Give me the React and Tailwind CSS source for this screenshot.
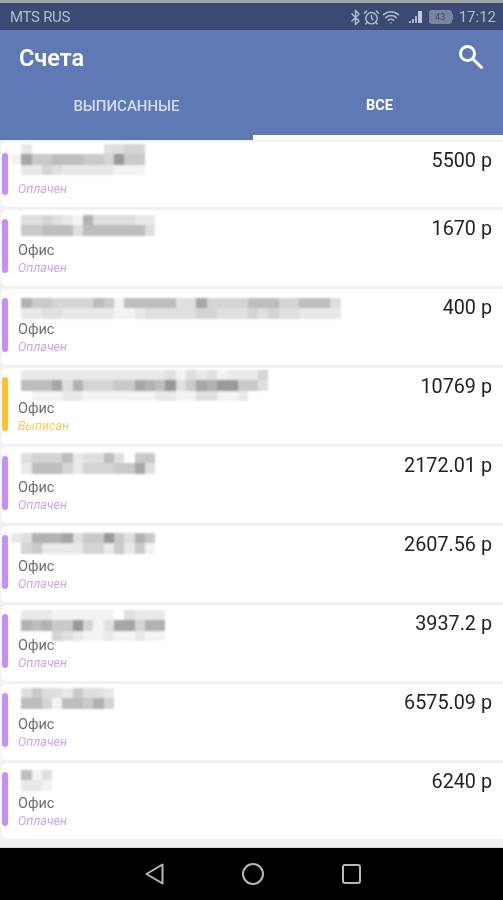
import { Bluetooth, AlarmClock, Wifi } from 'lucide-react'

const shade = {
  0: 'bg-transparent',
  1: 'bg-[#f3f3f3]',
  2: 'bg-[#e9e9e9]',
  3: 'bg-[#dfdfdf]',
  4: 'bg-[#d4d4d4]',
  5: 'bg-[#c9c9c9]',
  6: 'bg-[#bdbdbd]',
  7: 'bg-[#b2b2b2]',
  8: 'bg-[#a6a6a6]',
  9: 'bg-[#999999]',
}

const invoices = [
  { amount: '5500 р', top: 'mt-[2px]', name: ['0200000003344', '1855666554955', '0224322222111'], office: false },
  { amount: '1670 р', top: 'mt-[5px]', name: ['03343217333322', '05566636666663'], office: true },
  { amount: '400 р', top: 'mt-[9px]', name: ['07554444651666663384444666446663', '02233222221123333344333434332222'], office: true },
  { amount: '10769 р', top: 'mt-[2px]', name: ['0222222222222223132312224', '0666837444558769358799553', '0011122111111122113311200'], office: true, issued: true },
  { amount: '2172.01 р', top: 'mt-[6px]', name: ['03444623363055', '02666424445583'], office: true },
  { amount: '2607.56 р', top: 'mt-[7px]', name: ['23777835595375', '04522224425251'], office: true },
  { amount: '3937.2 р', top: 'mt-[5px]', name: ['022211111103222', '076755941388477', '000043211211211'], office: true },
  { amount: '6575.09 р', top: 'mt-[4px]', name: ['0353325332', '0664166574'], office: true },
  { amount: '6240 р', top: 'mt-[7px]', name: ['0613', '0221'], office: true },
]

// blurred customer name from the screenshot
const Mosaic = ({ rows, top }) => (
  <div className={`${top} ml-[-7px] blur-[1px]`}>
    {rows.map((row, i) => (
      <div key={i} className="flex">
        {row.split('').map((c, j) => (
          <div key={j} className={`h-[10.3px] w-[10.3px] shrink-0 ${shade[c]}`} />
        ))}
      </div>
    ))}
  </div>
)

const InvoiceCard = ({ invoice }) => (
  <div className={`relative ml-[1px] flex rounded-l-md bg-white pl-[17px] pr-[11px] ${invoice.office ? 'h-[76px]' : 'h-[65px]'}`}>
    <div
      className={`absolute left-[1px] w-[6px] rounded-full ${invoice.issued ? 'bg-[#f8c230]' : 'bg-[#c590f5]'} ${
        invoice.office ? 'top-[9px] h-[54px]' : 'top-[11px] h-[42px]'
      }`}
    />
    <div className="min-w-0 flex-1">
      <div className="flex h-[31px] flex-col">
        <Mosaic rows={invoice.name} top={invoice.top} />
      </div>
      {invoice.office ? (
        <div className="h-[19px] text-[14.5px] leading-[19px] text-[#6d6d6d]">Офис</div>
      ) : (
        <div className="h-[8px]" />
      )}
      <div className={`h-[16px] text-[12.5px] italic leading-[16px] ${invoice.issued ? 'text-[#f7cb5c]' : 'text-[#c5a6f0]'}`}>
        {invoice.issued ? 'Выписан' : 'Оплачен'}
      </div>
    </div>
    <div className="pt-[6px] text-[19.8px] leading-[26px] text-[#222222]">{invoice.amount}</div>
  </div>
)

const SignalIcon = () => (
  <svg width="15" height="14" viewBox="0 0 15 14" fill="#aab3c8">
    <rect x="0" y="11" width="2" height="2" />
    <rect x="3" y="9" width="2" height="4" />
    <rect x="6" y="6" width="2" height="7" />
    <rect x="9" y="1" width="4" height="12" fill="#c2c9da" />
  </svg>
)

const StatusBar = () => (
  <div className="flex h-[27px] items-center bg-[#3a4a72] pl-[10px] pr-[7px] pt-[1px] text-[#b3bbce]">
    <span className="text-[15px] tracking-[-0.3px]">MTS RUS</span>
    <div className="ml-auto flex items-center">
      <Bluetooth size={17} strokeWidth={2} />
      <AlarmClock size={17} strokeWidth={2} className="ml-[-1px]" />
      <Wifi size={18} strokeWidth={2} className="ml-[2px]" />
      <div className="ml-[9px]">
        <SignalIcon />
      </div>
      <div className="ml-[5px] flex h-[14px] w-[23px] items-center justify-center rounded-[3px] bg-[#79849f] text-[9px] leading-none text-[#3a4a72]">
        43
      </div>
      <div className="h-[6px] w-[1px] bg-[#79849f]" />
      <span className="ml-[6px] text-[15px]">17:12</span>
    </div>
  </div>
)

const NavBar = () => (
  <div className="flex h-[52px] items-center justify-center gap-[75px] bg-black pl-[3px]">
    <svg width="24" height="24" viewBox="0 0 24 24" fill="none" stroke="#b9b9b9" strokeWidth="2" strokeLinejoin="round">
      <path d="M20.5 2.5 L4.5 12 L20.5 21.5 Z" />
    </svg>
    <svg width="24" height="24" viewBox="0 0 24 24" fill="none" stroke="#b9b9b9" strokeWidth="2">
      <circle cx="12" cy="12" r="10" />
    </svg>
    <svg width="24" height="24" viewBox="0 0 24 24" fill="none" stroke="#b9b9b9" strokeWidth="2">
      <rect x="3" y="3" width="17" height="18" rx="2" />
    </svg>
  </div>
)

export default function App() {
  return (
    <div className="flex h-[900px] w-[503px] flex-col overflow-hidden bg-[#f1f1f1] font-['Roboto',sans-serif] blur-[0.4px]">
      <div className="h-[3px] bg-[#a3a2a6]" />
      <StatusBar />
      <header className="bg-[#5f79b4]">
        <div className="flex h-[58px] items-center justify-between pl-[19px] pr-[20px]">
          <h1 className="text-[23.5px] font-semibold text-white">Счета</h1>
          <svg width="24" height="24" viewBox="0 0 24 24" fill="none" stroke="white" strokeWidth="3" className="mb-[4px]">
            <circle cx="8.5" cy="8.5" r="7" />
            <path d="M14 14 L22.5 22.5" strokeLinecap="round" />
          </svg>
        </div>
        <div className="flex h-[52px]">
          <div className="w-[253px] pt-[9px] text-center text-[15px] font-medium leading-[18px] text-[#d5dcec]">ВЫПИСАННЫЕ</div>
          <div className="flex-1 border-b-[5px] border-white pl-[3px] pt-[9px] text-center text-[14.5px] font-bold leading-[18px] text-white">ВСЕ</div>
        </div>
      </header>
      <div className="flex min-h-0 flex-1 flex-col gap-[3px] pt-[2px]">
        {invoices.map((invoice, i) => (
          <InvoiceCard key={i} invoice={invoice} />
        ))}
      </div>
      <div className="h-[1px] bg-[#d8d8d8]" />
      <NavBar />
    </div>
  )
}
